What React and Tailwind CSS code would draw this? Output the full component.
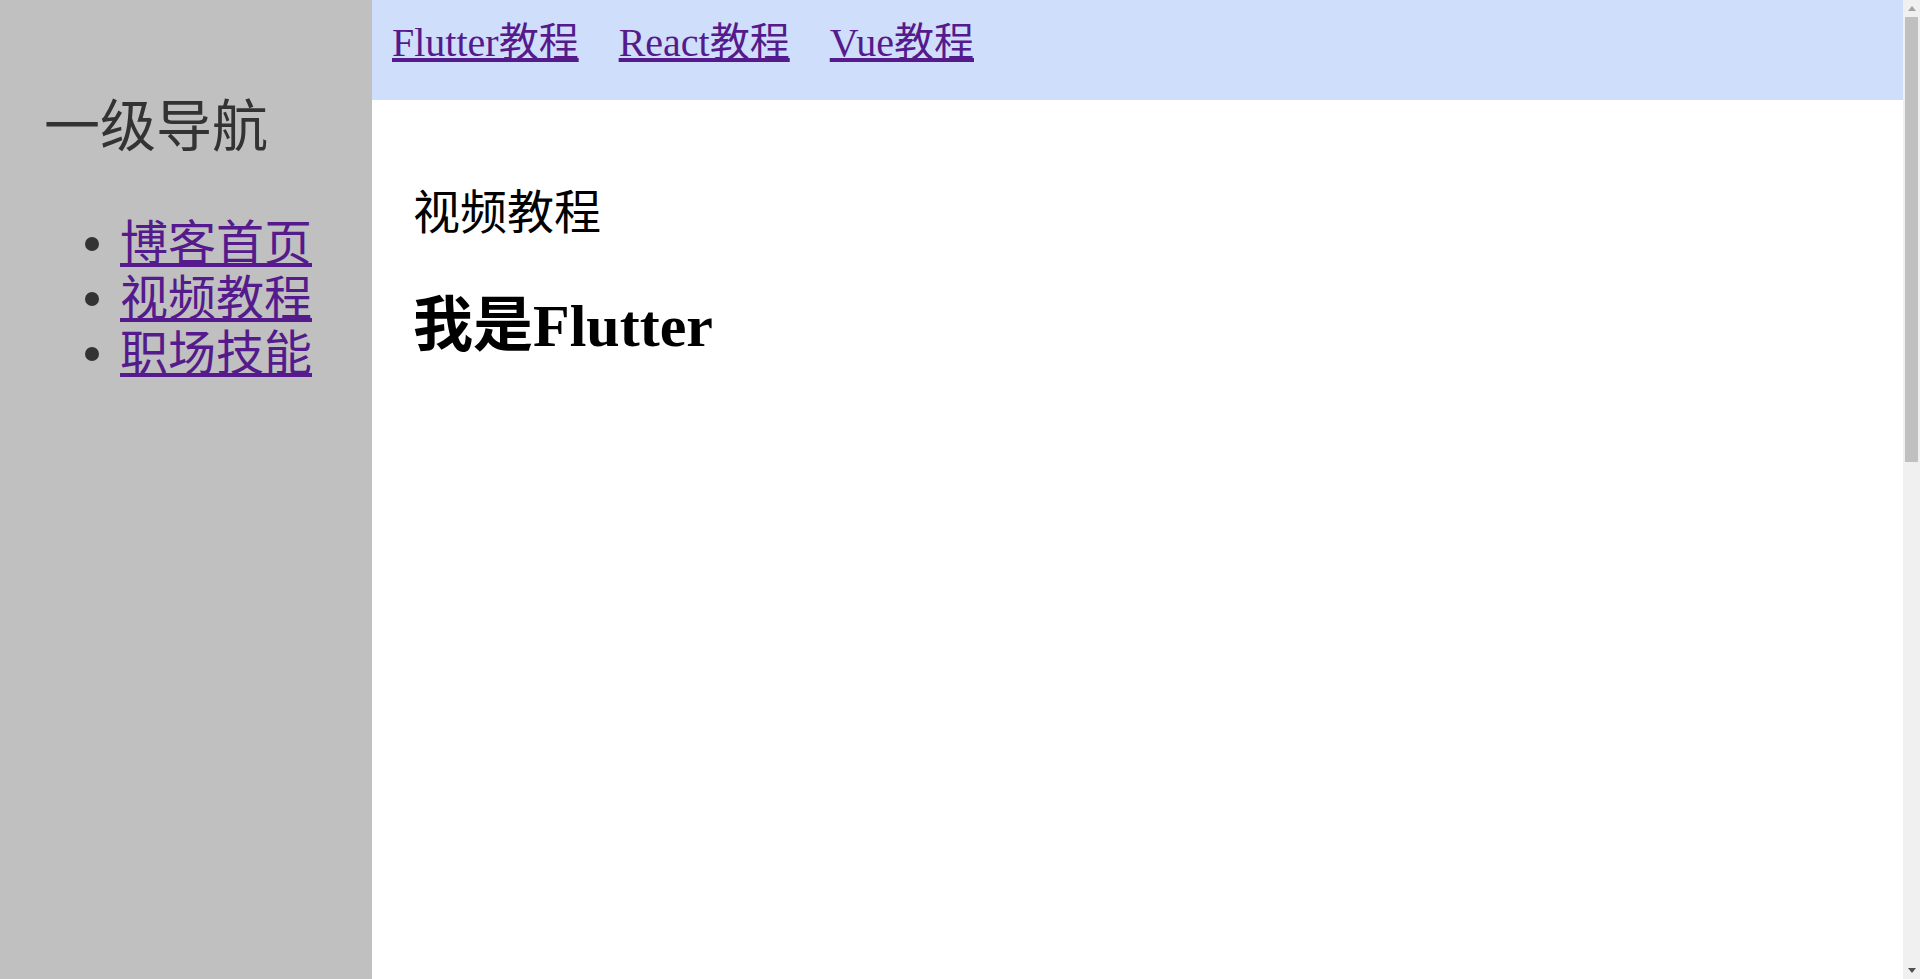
export default function App() {
  const serif = { fontFamily: '"Liberation Serif", "Noto Sans CJK SC", serif' };
  return (
    <div className="flex h-[979px] overflow-hidden bg-white" style={serif}>
      <div className="flex flex-1 min-w-0">
        <aside className="w-[372px] shrink-0 bg-[#c0c0c0]">
          <h2 className="ml-[44px] mt-[95px] text-[56px] leading-[64px] font-normal text-[#333]">一级导航</h2>
          <ul className="mt-[57px] flex flex-col">
            {["博客首页", "视频教程", "职场技能"].map((t) => (
              <li key={t} className="flex items-center h-[55px] text-[48px] leading-[55px]">
                <span className="ml-[85px] w-[14px] h-[14px] rounded-full bg-[#333] shrink-0"></span>
                <a href="#" className="ml-[21px] text-[#551a8b] underline">{t}</a>
              </li>
            ))}
          </ul>
        </aside>
        <main className="flex-1 flex flex-col">
          <nav className="h-[100px] shrink-0 bg-[#cfdefb] flex items-start gap-[40px] pl-[20px] pt-[20px] text-[40px] leading-[46px]">
            <a href="#" className="text-[#551a8b] underline">Flutter教程</a>
            <a href="#" className="text-[#551a8b] underline">React教程</a>
            <a href="#" className="text-[#551a8b] underline">Vue教程</a>
          </nav>
          <div className="pl-[41px] text-black">
            <p className="mt-[86px] text-[47px] leading-[54px]">视频教程</p>
            <h2 className="mt-[52px] text-[60px] leading-[69px] font-bold">我是Flutter</h2>
          </div>
        </main>
      </div>
      <div className="w-[17px] shrink-0 bg-[#f0f0f0] flex flex-col items-center">
        <div className="h-[17px] w-full flex items-center justify-center">
          <svg width="8" height="5" viewBox="0 0 8 5"><path d="M4 0 L8 5 L0 5 Z" fill="#a3a3a3" /></svg>
        </div>
        <div className="w-[13px] h-[445px] bg-[#c0c0c0]"></div>
        <div className="flex-1"></div>
        <div className="h-[17px] w-full flex items-center justify-center">
          <svg width="8" height="5" viewBox="0 0 8 5"><path d="M0 0 L8 0 L4 5 Z" fill="#505050" /></svg>
        </div>
      </div>
    </div>
  );
}
